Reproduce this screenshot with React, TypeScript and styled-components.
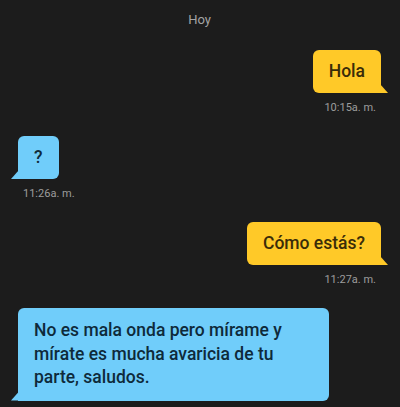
import React from 'react';
import styled, { createGlobalStyle, css } from 'styled-components';

const GlobalStyle = createGlobalStyle`
  html, body {
    margin: 0;
    padding: 0;
    background: #1c1c1c;
  }
  body {
    font-family: Roboto, "Liberation Sans", sans-serif;
  }
`;

type Side = 'left' | 'right';

interface Message {
  side: Side;
  text: string;
  time: string;
  wide?: boolean;
}

const messages: Message[] = [
  { side: 'right', text: 'Hola', time: '10:15a. m.' },
  { side: 'left', text: '?', time: '11:26a. m.' },
  { side: 'right', text: 'Cómo estás?', time: '11:27a. m.' },
  {
    side: 'left',
    text: 'No es mala onda pero mírame y mírate es mucha avaricia de tu parte, saludos.',
    time: '',
    wide: true,
  },
];

export default function App() {
  return (
    <>
      <GlobalStyle />
      <Screen>
        <DayLabel>Hoy</DayLabel>
        {messages.map((m, i) => (
          <Row key={i} side={m.side}>
            <Bubble side={m.side} wide={m.wide}>
              {m.text}
            </Bubble>
            {m.time && <Time side={m.side}>{m.time}</Time>}
          </Row>
        ))}
      </Screen>
    </>
  );
}

const Screen = styled.div`
  width: 400px;
  height: 407px;
  overflow: hidden;
  box-sizing: border-box;
  padding: 11px 19px 0 18px;
  display: flex;
  flex-direction: column;
  gap: 22px;
`;

const DayLabel = styled.div`
  text-align: center;
  color: #a3a3a3;
  font-size: 13px;
  line-height: 17px;
`;

const Row = styled.div<{ side: Side }>`
  display: flex;
  flex-direction: column;
  align-items: ${(p) => (p.side === 'right' ? 'flex-end' : 'flex-start')};
  gap: 8px;
`;

const Bubble = styled.div<{ side: Side; wide?: boolean }>`
  position: relative;
  box-sizing: border-box;
  min-width: 40px;
  text-align: center;
  font-size: 17.5px;
  font-weight: 500;
  line-height: 23px;
  padding: 10px 16px;
  border-radius: 6px;
  ${(p) =>
    p.side === 'right'
      ? css`
          background: #ffc928;
          color: #3a2c08;
          border-bottom-right-radius: 0;
        `
      : css`
          background: #70cdfa;
          color: #0e2a3a;
          border-bottom-left-radius: 0;
        `}
  ${(p) =>
    p.wide &&
    css`
      width: 311px;
      text-align: left;
      font-size: 17.5px;
      line-height: 23.5px;
      padding: 11px 16px 11px;
    `}

  &::after {
    content: '';
    position: absolute;
    bottom: 0;
    width: 8px;
    height: 9px;
    background: inherit;
    ${(p) =>
      p.side === 'right'
        ? css`
            right: -7px;
            clip-path: polygon(0 0, 100% 100%, 0 100%);
          `
        : css`
            left: -7px;
            clip-path: polygon(100% 0, 100% 100%, 0 100%);
          `}
  }
`;

const Time = styled.div<{ side: Side }>`
  color: #9c9c9c;
  font-size: 11px;
  line-height: 13px;
  padding: ${(p) => (p.side === 'right' ? '0 5px 0 0' : '0 0 0 5px')};
`;
